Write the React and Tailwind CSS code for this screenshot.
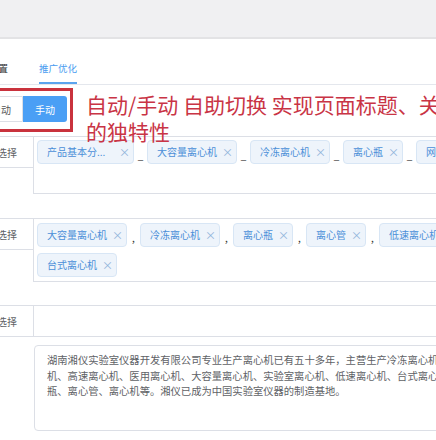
import React from 'react';

const font = "font-['Noto_Sans_CJK_SC','Noto_Sans',sans-serif]";

function Tag({ text, w }) {
  return (
    <span className="flex items-center h-[24px] pl-[9px] pr-[6px] rounded-[4px] border border-[#d8e6f5] bg-[#eef4fb] text-[#4b8fd8] text-[10px] leading-none whitespace-nowrap shrink-0">
      <span className={w ? 'inline-block overflow-hidden' : ''} style={w ? { width: w } : undefined}>{text}</span>
      <span className="ml-[5px] w-[8px] text-center text-[#8fb3da] text-[11px]">×</span>
    </span>
  );
}

function Sep({ ch, under }) {
  return (
    <span className={`w-[13px] shrink-0 text-center text-[#333] text-[10px] leading-none ${under ? 'self-end pb-[4px]' : 'self-center pt-[6px]'}`}>
      {ch}
    </span>
  );
}

function Label({ children }) {
  return (
    <div className="w-[33px] h-[32px] shrink-0 flex items-center justify-end pr-[16px] border-y border-[#dcdfe6] text-[10px] text-[#606266] whitespace-nowrap overflow-hidden">
      {children}
    </div>
  );
}

export default function App() {
  const row1 = [
    ['产品基本分...', 67],
    ['大容量离心机'],
    ['冷冻离心机'],
    ['离心瓶'],
    ['网站优化'],
  ];
  const row2 = ['大容量离心机', '冷冻离心机', '离心瓶', '离心管', '低速离心机', '台式离心机'];

  return (
    <div className={`relative w-[436px] h-[440px] overflow-hidden bg-white ${font}`}>
      {/* top band */}
      <div className="h-[39px] bg-[#f0f0f2] border-b-2 border-[#e3e3e5]" />

      {/* tabs */}
      <div className="h-[46px] flex items-end gap-[31px] -ml-[11px] border-b border-[#e4e7ed] text-[9.5px] leading-[14px]">
        <div className="pb-[7px] border-b-2 border-transparent text-[#303133]">设置</div>
        <div className="pb-[7px] border-b-2 border-[#5aa4ee] text-[#4a9cf0]">推广优化</div>
      </div>

      {/* mode switch */}
      <div className="relative mt-[11px] flex h-[26px] w-[67px]">
        <div className="w-[44px] -ml-[21px] shrink-0 flex items-center justify-center border border-[#dcdfe6] rounded-l-[3px] text-[10px] text-[#555] bg-white">自动</div>
        <div className="w-[44px] shrink-0 flex items-center justify-center rounded-r-[3px] bg-[#4a9ff5] text-white text-[10px]">手动</div>
        <div className="absolute -top-[8px] -bottom-[10px] -left-[20px] -right-[6px] border-[3px] border-[#c9323d]" />
      </div>

      {/* row 1 */}
      <div className="mt-[14px] flex items-start">
        <Label>选择</Label>
        <div className="h-[58px] w-[480px] shrink-0 border border-[#dcdfe6] pl-[3px] pt-[3px]">
          <div className="flex h-[24px]">
            {row1.map(([t, w], i) => (
              <React.Fragment key={i}>
                {i > 0 && <Sep ch="_" under />}
                <Tag text={t} w={w} />
              </React.Fragment>
            ))}
          </div>
        </div>
      </div>

      {/* row 2 */}
      <div className="mt-[24px] flex items-start">
        <Label>选择</Label>
        <div className="h-[64px] w-[480px] shrink-0 border border-[#dcdfe6] pl-[3px] pt-[4px] flex flex-wrap content-start gap-y-[6px]">
          {row2.map((t, i) => (
            <div key={i} className="flex h-[24px]">
              <Tag text={t} />
              {i < row2.length - 1 && <Sep ch="," />}
            </div>
          ))}
        </div>
      </div>

      {/* row 3 */}
      <div className="mt-[23px] flex items-start">
        <Label>选择</Label>
        <div className="h-[32px] w-[480px] shrink-0 border border-[#dcdfe6]" />
      </div>

      {/* textarea */}
      <div className="mt-[8px] ml-[34px] w-[480px] h-[86px] border border-[#dcdfe6] rounded-[4px] pl-[12px] pt-[6px] text-[10.3px] leading-[15.5px] text-[#606266] whitespace-nowrap overflow-hidden">
        <div>湖南湘仪实验室仪器开发有限公司专业生产离心机已有五十多年，主营生产冷冻离心机、</div>
        <div>机、高速离心机、医用离心机、大容量离心机、实验室离心机、低速离心机、台式离心</div>
        <div>瓶、离心管、离心机等。湘仪已成为中国实验室仪器的制造基地。</div>
      </div>

      {/* annotation text */}
      <div className="absolute left-[86px] top-[91px] w-[400px] text-[21px] leading-[27px] text-[#c93445] whitespace-nowrap">
        <div>自动/手动 自助切换 实现页面标题、关键词</div>
        <div>的独特性</div>
      </div>
    </div>
  );
}
